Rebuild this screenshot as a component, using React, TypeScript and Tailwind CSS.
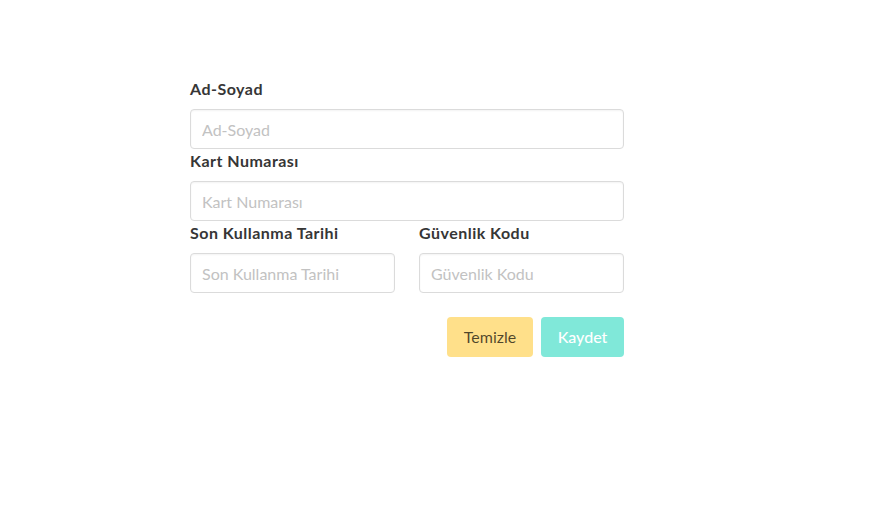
import React from 'react';

const inputClass =
  "h-10 w-full rounded border border-[#dbdbdb] bg-white px-[11px] text-base text-[#363636] shadow-[inset_0_1px_2px_rgba(10,10,10,0.05)] outline-none placeholder:text-[#c2c2c2]";

const Field = ({ label }: { label: string }) => (
  <div className="flex flex-col">
    <label className="mb-2 text-base font-bold leading-6 tracking-[0.03em] text-[#363636]">{label}</label>
    <input className={inputClass} placeholder={label} />
  </div>
);

const App = () => {
  return (
    <div className="min-h-[528px] w-full bg-white font-['Lato',sans-serif]">
      <div className="ml-[190px] w-[434px] pt-[77px]">
        <Field label="Ad-Soyad" />
        <Field label="Kart Numarası" />
        <div className="grid grid-cols-2 gap-6">
          <Field label="Son Kullanma Tarihi" />
          <Field label="Güvenlik Kodu" />
        </div>
        <div className="mt-6 flex justify-end gap-2">
          <button className="h-10 w-[86px] rounded bg-[#ffe08a] text-base text-black/70">
            Temizle
          </button>
          <button
            disabled
            className="h-10 w-[83px] rounded bg-[#80e8d9] text-base font-medium text-white"
          >
            Kaydet
          </button>
        </div>
      </div>
    </div>
  );
};

export default App;
